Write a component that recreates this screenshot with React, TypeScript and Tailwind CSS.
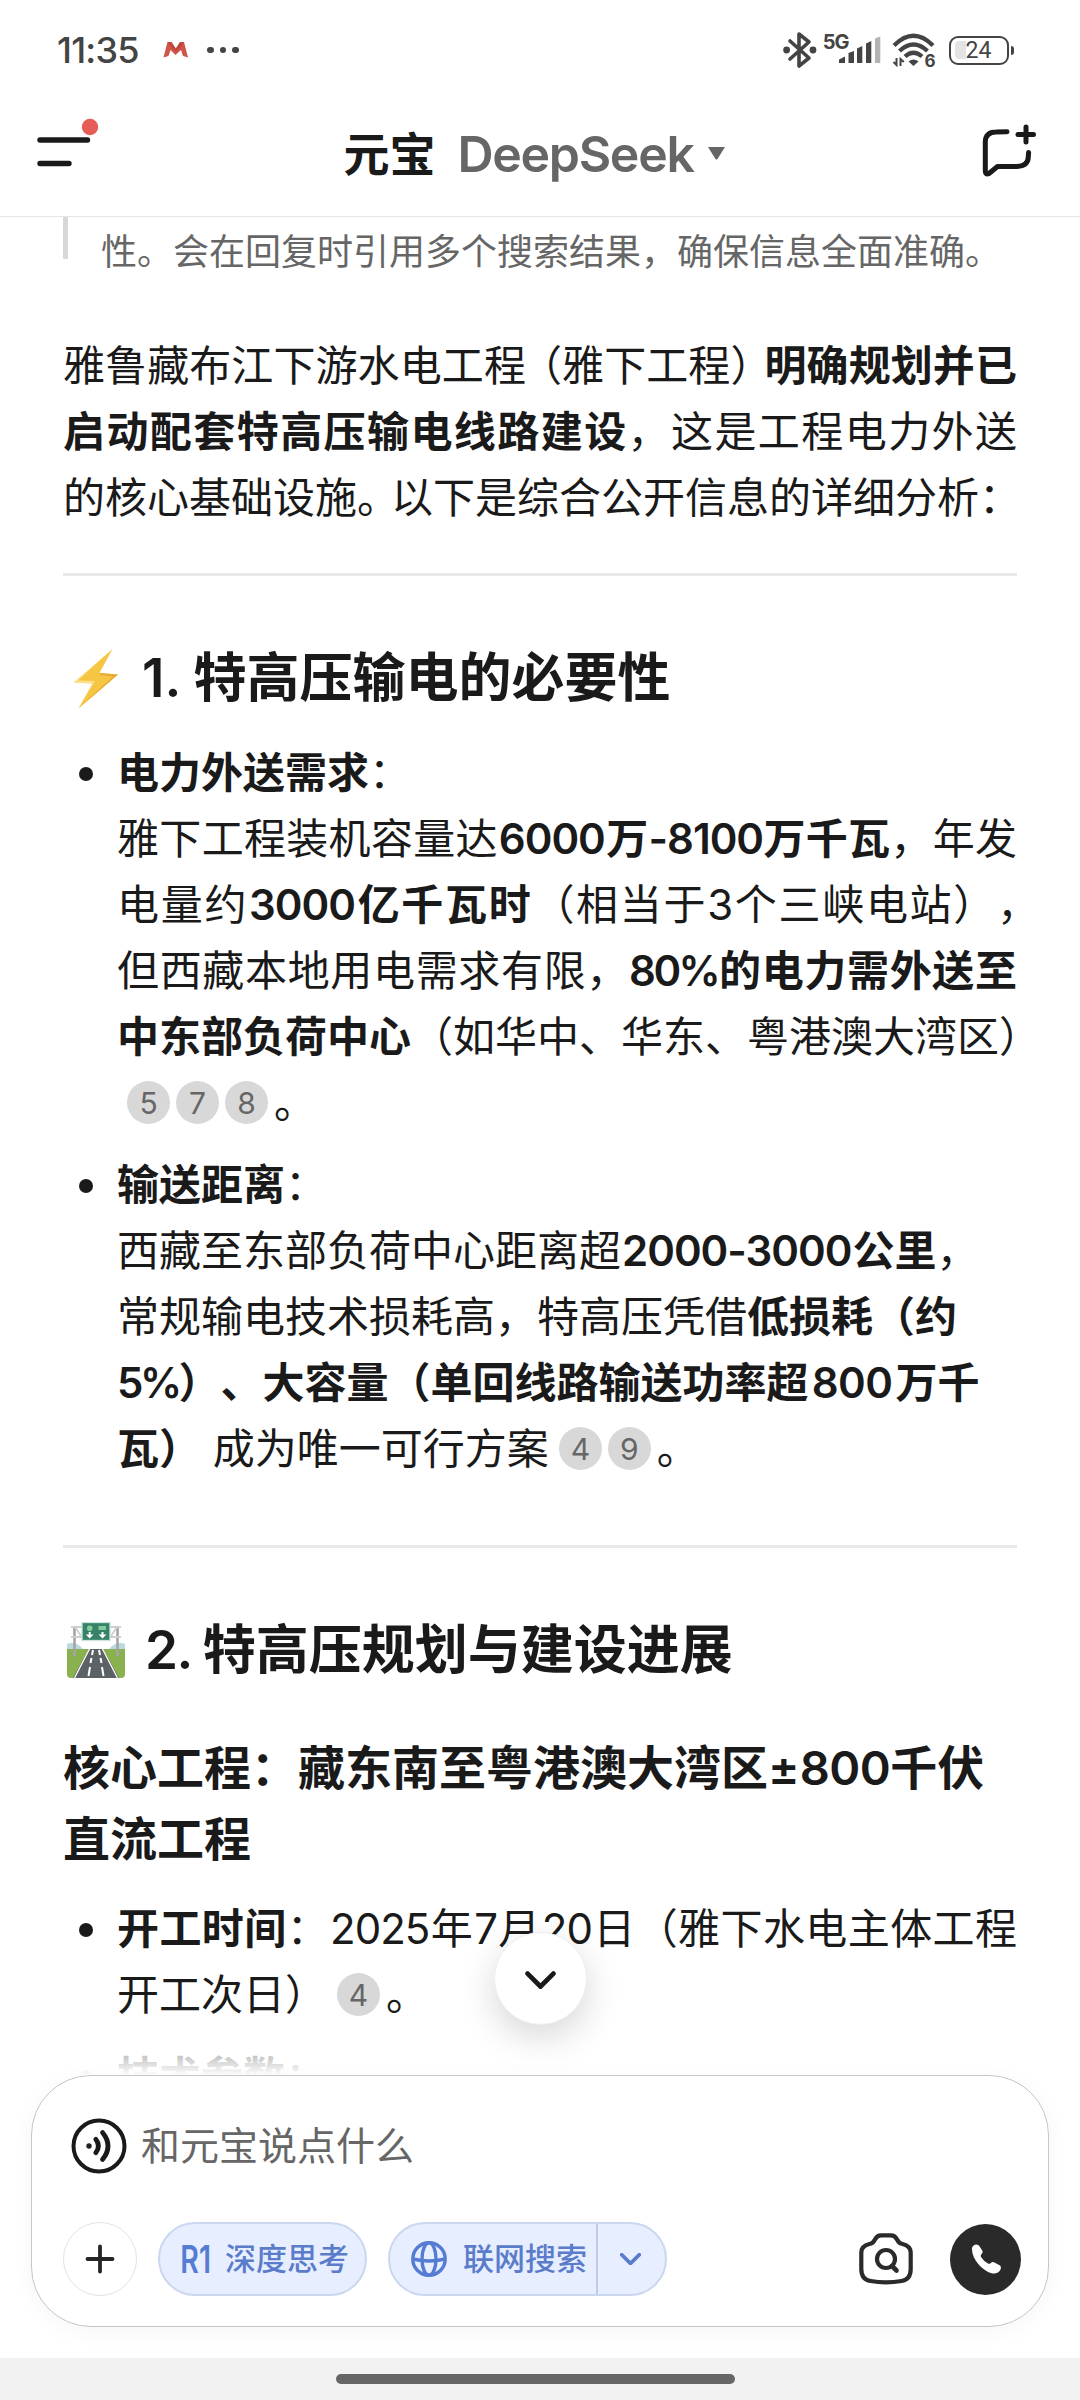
import type { ReactNode } from "react";
import clsx from "clsx";

// --- Icons ---
function MenuIcon() {
  return (
    <svg width="64" height="50" viewBox="0 0 64 50" fill="none">
      <path d="M3 22H50.5M3 45.5H32" stroke="#1a1a1a" strokeWidth="5.4" strokeLinecap="round" />
      <circle cx="53" cy="9" r="8.2" fill="#e65d57" />
    </svg>
  );
}

function NewChatIcon() {
  return (
    <svg width="54" height="54" viewBox="0 0 54 54" fill="none" stroke="#1a1a1a" strokeWidth="5" strokeLinecap="round" strokeLinejoin="round">
      <path d="M25 7.7L14 8Q3.3 8 3.3 18V47Q3.3 51 7 49.5L15.5 42.5H35Q46 42 46.3 33L46.6 28.5" />
      <path d="M44 3V18M36 10.5H51.5" />
    </svg>
  );
}

function BluetoothIcon() {
  return (
    <svg width="34" height="38" viewBox="0 0 34 38" fill="none" stroke="#444" strokeWidth="3.6" strokeLinejoin="round" strokeLinecap="round">
      <path d="M7 10L26 27L16 35V3L26 11L7 28" />
      <circle cx="3.6" cy="19" r="1.6" fill="#444" />
      <circle cx="30" cy="19" r="1.6" fill="#444" />
    </svg>
  );
}

function SignalIcon() {
  return (
    <svg width="42" height="28" viewBox="0 0 42 28" fill="#444">
      <path d="M0 27V23.5L6 20.5V27ZM9.500 27V17L15 15V27ZM18 27V12.500L23.300 10V27ZM27 27V7.500L32.300 5V27Z" />
      <path d="M36 27V2.500L41.300 0.500V27Z" fill="#b3b3b3" />
    </svg>
  );
}

function WifiIcon() {
  return (
    <svg width="44" height="34" viewBox="0 0 44 34" fill="none" stroke="#444" strokeWidth="4.200">
      <path d="M2 12.500Q21.500 -7 41 12.500" />
      <path d="M7.500 18Q21.500 5 35.500 18" />
      <path d="M13 23.500Q21.500 16 30 23.500" />
      <path d="M16.500 28.500Q21.500 24.500 26.500 28.500L21.500 33Z" fill="#444" stroke="none" />
      <path d="M4.500 25V32L1.500 29M8.500 33V26L11.800 29" strokeWidth="2" />
    </svg>
  );
}

function GmailBadge() {
  return (
    <svg width="26" height="18" viewBox="0 0 26 18">
      <path d="M4.500 1L0.500 16.500L5.500 15L7.500 9L12.500 14L18 9L20 15L25 16.500L21 1H17L12.800 7.500L8.500 1Z" fill="#cf5448" />
      <path d="M4.500 1H8.500L12.800 7.500L12.500 10.500L8 5.500ZM17 1H21L18 6L12.500 10.500L12.800 7.500Z" fill="#a8382f" opacity=".45" />
    </svg>
  );
}

function BoltEmoji() {
  return (
    <svg width="46" height="62" viewBox="0 0 46 62">
      <path d="M39.500 1L1 34.500L19.500 35.500L5.500 60.500L45 26.500L26.500 25Z" fill="#f6c544" />
      <path d="M39.500 1L5 32.500L22 33L7.500 57L19.500 35.500L1 34.500Z" fill="#fbe08a" />
      <path d="M37 5L8 31L25 32L16 48L40 28L24 27Z" fill="#f6c544" />
      <path d="M45 26.500L26.500 25L28 27.500L40 28.500L5.500 60.500Z" fill="#e9ab33" />
    </svg>
  );
}

function MotorwayEmoji() {
  return (
    <svg width="58" height="58" viewBox="0 0 58 58">
      <path d="M0 22Q8 18 16 27H42Q50 18 58 22V32H0Z" fill="#b9dbe0" />
      <path d="M0 27H58V52Q58 56 54 56H4Q0 56 0 52Z" fill="#8ab150" />
      <path d="M22 27H36L52 56H6Z" fill="#5c6165" />
      <path d="M22.500 27L7.500 56M35.500 27L50.500 56" stroke="#fff" strokeWidth="1.300" />
      <path d="M26 28L25 33M24.500 36L23.500 41M23 45L21.500 54M32 28L33 33M33.500 36L34.500 41M35 45L36.500 54" stroke="#fff" strokeWidth="2" />
      <path d="M7.500 4V34M50.500 4V34" stroke="#a5a5a5" strokeWidth="2.600" />
      <path d="M4 5H54M4 15H54M8 5L14 14M50 5L44 14" stroke="#cfcfcf" strokeWidth="1.800" />
      <rect x="15" y="0.500" width="28" height="18" fill="#36836a" stroke="#c9e6d8" strokeWidth="1.300" />
      <circle cx="22.700" cy="6.200" r="2.800" fill="#86cb9a" />
      <rect x="31.500" y="4" width="7.500" height="4" fill="#86cb9a" />
      <path d="M22.700 10V15M35.500 10V15" stroke="#fff" strokeWidth="2" />
      <path d="M18.800 12.500L22.700 16.500L26.600 12.500M31.600 12.500L35.500 16.500L39.400 12.500" fill="#fff" />
    </svg>
  );
}

function VoiceIcon() {
  return (
    <svg width="56" height="56" viewBox="0 0 56 56" fill="none" stroke="#1a1a1a" strokeLinecap="round">
      <circle cx="28" cy="28" r="25.500" strokeWidth="4" />
      <circle cx="18" cy="28" r="2.700" fill="#222" stroke="none" />
      <path d="M24.800 21.300Q30 28 24.800 34.700" strokeWidth="4.800" />
      <path d="M31.500 14.500Q42.500 28 31.500 41.500" strokeWidth="4.800" />
    </svg>
  );
}

function PlusIcon() {
  return (
    <svg width="30" height="30" viewBox="0 0 30 30" stroke="#262626" strokeWidth="3.800" strokeLinecap="round">
      <path d="M15 2.500V27.500M2.500 15H27.500" />
    </svg>
  );
}

function GlobeIcon() {
  return (
    <svg width="36" height="36" viewBox="0 0 36 36" fill="none" stroke="#557cd3" strokeWidth="3.400">
      <circle cx="18" cy="18" r="16.200" />
      <ellipse cx="18" cy="18" rx="7" ry="16.200" />
      <path d="M2 18Q18 22 34 18" />
    </svg>
  );
}

function Chevron({ width, stroke, weight }: { width: number; stroke: string; weight: number }) {
  return (
    <svg width={width} height={width * 0.6} viewBox="0 0 30 18" fill="none" stroke={stroke} strokeWidth={weight} strokeLinecap="round" strokeLinejoin="round">
      <path d="M2.500 2.500L15 15L27.500 2.500" />
    </svg>
  );
}

function CameraSearchIcon() {
  return (
    <svg width="54" height="52" viewBox="0 0 54 52" fill="none" stroke="#2a2a2a" strokeWidth="4.200" strokeLinecap="round" strokeLinejoin="round">
      <path d="M22 2.300H32Q36 2.300 38 6.500Q40 10.500 43.500 11Q51.700 13 51.700 19.500V36Q51.700 46.500 42.500 48Q27 50.800 11.500 48Q2.300 46.500 2.300 36V19.500Q2.300 13 10.500 11Q14 10.500 16 6.500Q18 2.300 22 2.300Z" />
      <circle cx="27" cy="26" r="9" />
      <path d="M33 33L37.500 37.500" strokeWidth="4.600" />
    </svg>
  );
}

function PhoneIcon() {
  return (
    <svg width="30" height="30" viewBox="0 0 30 30" fill="#fff">
      <path d="M1 4Q2 0.500 5.500 0.500Q8 0.500 9 3L11.500 7Q12 8.500 10.500 10Q9.300 11.500 10 13Q12.500 17 17 19.500Q18.500 20.300 19.500 19.300Q21.500 17.500 23 18.300L29 21.500Q30.500 23 29.500 25.500Q27.500 30 21.500 29.500Q15 28 8.500 21.500Q0.500 13 1 4Z" />
    </svg>
  );
}

// --- Text helpers ---
function Line({ children, className }: { children: ReactNode; className?: string }) {
  return <span className={clsx("block h-[66px] whitespace-nowrap leading-[66px]", className)}>{children}</span>;
}

function B({ children }: { children: ReactNode }) {
  return <b className="font-semibold">{children}</b>;
}

// Latin digits run slightly tighter than the CJK text around them
function Num({ children, className = "mx-px tracking-[-1px]" }: { children: ReactNode; className?: string }) {
  return <span className={className}>{children}</span>;
}

function Cite({ n }: { n: number }) {
  return (
    <span className="mr-1.5 inline-flex size-[43px] items-center justify-center rounded-full bg-[#d8d8d8] align-middle text-[30px] leading-none text-[#666]">
      {n}
    </span>
  );
}

function Cites({ refs }: { refs: number[] }) {
  return (
    <span className="relative -top-[4px] ml-[10px]">
      {refs.map((n) => (
        <Cite key={n} n={n} />
      ))}
    </span>
  );
}

function Item({ children, className }: { children: ReactNode; className?: string }) {
  return (
    <li className={clsx("flex", className)}>
      <span className="mt-[27px] mr-[24px] ml-4 size-3.5 shrink-0 rounded-full bg-[#1a1a1a]" />
      <div className="w-[900px]">{children}</div>
    </li>
  );
}

function StatusBar() {
  return (
    <div className="flex h-[100px] items-center pl-[57px] pr-[66px] text-[#444]">
      <span className="w-[106px] text-[36px] font-medium tracking-[-0.8px]">11:35</span>
      <GmailBadge />
      <div className="ml-[18px] flex gap-[6px]">
        <i className="size-[6.500px] rounded-full bg-[#444]" />
        <i className="size-[6.500px] rounded-full bg-[#444]" />
        <i className="size-[6.500px] rounded-full bg-[#444]" />
      </div>
      <div className="ml-auto flex items-center">
        <BluetoothIcon />
        <span className="-mr-[10px] ml-[6px] -mt-[17px] text-[20px] leading-none font-bold tracking-[-1px]">5G</span>
        <SignalIcon />
        <div className="relative ml-[11px]">
          <WifiIcon />
          <span className="absolute right-0 -bottom-[3px] text-[17px] leading-[17px] font-bold">6</span>
        </div>
        <div className="relative ml-[13px] flex h-[29px] w-[60px] items-center justify-center rounded-[9px] border-[2.500px] border-[#444]">
          <span className="absolute top-[3px] left-1 h-[18px] w-[11px] rounded-l-[4px] bg-[#e3e3e3]" />
          <span className="relative text-[23px] leading-none [font-family:Roboto]">24</span>
        </div>
        <span className="ml-0.5 h-[9px] w-[3.500px] rounded-r bg-[#444]" />
      </div>
    </div>
  );
}

function Header() {
  return (
    <header className="flex h-[117px] items-center justify-between border-b border-[#e5e5e5] pr-[44px] pl-[37px]">
      <div className="-mt-[30px]">
        <MenuIcon />
      </div>
      <div className="-mt-[9px] -ml-[15px] flex items-center whitespace-nowrap">
        <h1 className="text-[46px] leading-none font-bold text-[#1a1a1a]">元宝</h1>
        <span className="ml-[22px] text-[50px] leading-none font-semibold tracking-[-1.3px] text-[#666]">DeepSeek</span>
        <svg className="ml-[14px]" width="17" height="13" viewBox="0 0 17 13">
          <path d="M0 0H17L9.500 12Q8.500 13 7.500 12Z" fill="#666" />
        </svg>
      </div>
      <div className="-mt-[15px]">
        <NewChatIcon />
      </div>
    </header>
  );
}

function Answer() {
  return (
    <article className="px-[63px] text-[42px] text-[#1a1a1a]">
      <blockquote className="flex h-[116px] text-[36px] text-[#666]">
        <span className="h-[42px] w-[5px] bg-[#d8d8d8]" />
        <p className="ml-[33px] h-[68px] leading-[70px] whitespace-nowrap">性。会在回复时引用多个搜索结果，确保信息全面准确。</p>
      </blockquote>

      <p>
        <Line className="[text-align-last:justify]">
          雅鲁藏布江下游水电工<span className="tracking-[-6px]">程</span>（雅下工程
          <span className="tracking-[-8px]">）</span>
          <B>明确规划并已</B>
        </Line>
        <Line className="[text-align-last:justify]">
          <B>启动配套特高压输电线路建设</B>，这是工程电力外送
        </Line>
        <Line>
          的核心基础设施<span className="tracking-[-8px]">。</span>以下是综合公开信息的详细分析：
        </Line>
      </p>

      <hr className="mt-[42px] border-t-[3px] border-[#e8e8e8]" />

      <h2 className="mt-[67px] flex h-[72px] items-center text-[53px] font-semibold whitespace-pre">
        <span className="mr-[23px] ml-[10px] w-[46px]">
          <BoltEmoji />
        </span>
        <span>1. </span>特高压输电的必要性
      </h2>

      <ul className="mt-[25px]">
        <Item>
          <Line>
            <B>电力外送需求</B>：
          </Line>
          <Line className="[text-align-last:justify]">
            雅下工程装机容量达
            <B>
              <Num>6000</Num>万<Num className="tracking-[-1px]">-8100</Num>万千瓦
            </B>
            ，年发
          </Line>
          <Line className="w-[922px] [text-align-last:justify]">
            电量约
            <B>
              <Num>3000</Num>亿千瓦时
            </B>
            （相当于3个三峡电站），
          </Line>
          <Line className="[text-align-last:justify]">
            但西藏本地用电需求有限，
            <B>
              <Num className="tracking-[-2.5px]">80%</Num>的电力需外送至
            </B>
          </Line>
          <Line>
            <B>中东部负荷中心</B>（如华中、华东、粤港澳大湾区）
          </Line>
          <Line>
            <Cites refs={[5, 7, 8]} />。
          </Line>
        </Item>
        <Item className="mt-[16px]">
          <Line>
            <B>输送距离</B>：
          </Line>
          <Line>
            西藏至东部负荷中心距离超
            <B>
              <Num>2000-3000</Num>公里
            </B>
            ，
          </Line>
          <Line>
            常规输电技术损耗高，特高压凭借<B>低损耗（约</B>
          </Line>
          <Line>
            <B>
              <Num className="tracking-[-3.5px]">5%</Num>）、大容量（单回线路输送功率超
              <Num className="mx-[3px] tracking-[-0.5px]">800</Num>万千
            </B>
          </Line>
          <Line>
            <B>瓦）</B> 成为唯一可行方案
            <Cites refs={[4, 9]} />。
          </Line>
        </Item>
      </ul>

      <hr className="mt-[63px] border-t-[3px] border-[#e8e8e8]" />

      <h2 className="mt-[67px] flex h-[72px] items-center text-[53px] font-semibold whitespace-pre">
        <span className="mr-[20px] ml-[4px] w-[58px]">
          <MotorwayEmoji />
        </span>
        <span className="tracking-[-1.5px]">2. </span>特高压规划与建设进展
      </h2>

      <h3 className="mt-[45px] text-[47px] leading-[71px] font-semibold whitespace-nowrap">
        核心工程：藏东南至粤港澳大湾区±<span className="tracking-[-0.5px]">800</span>千伏
        <br />
        直流工程
      </h3>

      <ul className="mt-[22px]">
        <Item>
          <Line className="[text-align-last:justify]">
            <B>开工时间</B>：<Num>2025</Num>年<Num>7</Num>月<Num>20</Num>日（雅下水电主体工程
          </Line>
          <Line>
            开工次日）
            <Cites refs={[4]} />。
          </Line>
        </Item>
        <Item className="mt-[16px]">
          <Line>
            <B>技术参数</B>：
          </Line>
        </Item>
      </ul>
    </article>
  );
}

function Composer() {
  return (
    <section className="relative mx-[31px] h-[252px] shrink-0 rounded-[60px] border border-[#c6c6c6] bg-white px-[31px] pt-[42px] shadow-[0_4px_24px_rgba(0,0,0,0.04)]">
      <div className="flex h-[56px] items-center">
        <span className="ml-2">
          <VoiceIcon />
        </span>
        <span className="-mt-[2px] ml-[14px] text-[39px] leading-none text-[#666]">和元宝说点什么</span>
      </div>
      <div className="mt-[48px] flex h-[74px] items-center text-[31px] font-medium text-[#5a7cca]">
        <button className="flex size-[74px] items-center justify-center rounded-full border-[1.500px] border-[#e3e3e3]">
          <PlusIcon />
        </button>
        <button className="ml-[21px] flex h-[74px] w-[209px] items-center rounded-full border-2 border-[#cbd7ef] bg-[#e7eeff] pl-[18px] whitespace-nowrap">
          <span className="w-[47px] origin-left scale-x-75 text-[38px] leading-none font-semibold text-[#557cd3]">R1</span>
          深度思考
        </button>
        <div className="ml-[21px] flex h-[74px] w-[279px] items-center rounded-full border-2 border-[#cbd7ef] bg-[#e7eeff] pl-[21px]">
          <GlobeIcon />
          <span className="ml-4 whitespace-nowrap">联网搜索</span>
          <span className="ml-[9px] h-full w-[1.500px] bg-[#bccbec]" />
          <span className="ml-[22px]">
            <Chevron width={21} stroke="#5a7cca" weight={5.5} />
          </span>
        </div>
        <span className="ml-auto">
          <CameraSearchIcon />
        </span>
        <button className="mr-[-4px] ml-[37px] flex size-[71px] items-center justify-center rounded-full bg-[#2a2a2a]">
          <PhoneIcon />
        </button>
      </div>
    </section>
  );
}

export default function App() {
  return (
    <div
      lang="zh-CN"
      className="flex h-[2400px] w-[1080px] flex-col overflow-hidden bg-white [font-family:Inter,'Noto_Sans_CJK_SC',sans-serif] [text-spacing-trim:space-all]"
    >
      <StatusBar />
      <Header />
      <main className="relative h-[1858px] shrink-0 overflow-hidden">
        <Answer />
        {/* Fade above the composer */}
        <div className="absolute inset-x-0 bottom-0 h-[30px] bg-linear-to-b from-white/60 to-white" />
        <button className="absolute bottom-[50px] left-[494px] flex size-[93px] items-center justify-center rounded-full border border-[#eee] bg-white shadow-[0_12px_36px_rgba(0,0,0,0.16)]">
          <span className="mt-1">
            <Chevron width={31} stroke="#1a1a1a" weight={4.6} />
          </span>
        </button>
      </main>
      <Composer />
      <footer className="mt-auto flex h-[42px] shrink-0 items-start bg-[#f2f2f2] pt-4 pl-[336px]">
        <span className="h-[10px] w-[399px] rounded-full bg-[#666]" />
      </footer>
    </div>
  );
}
